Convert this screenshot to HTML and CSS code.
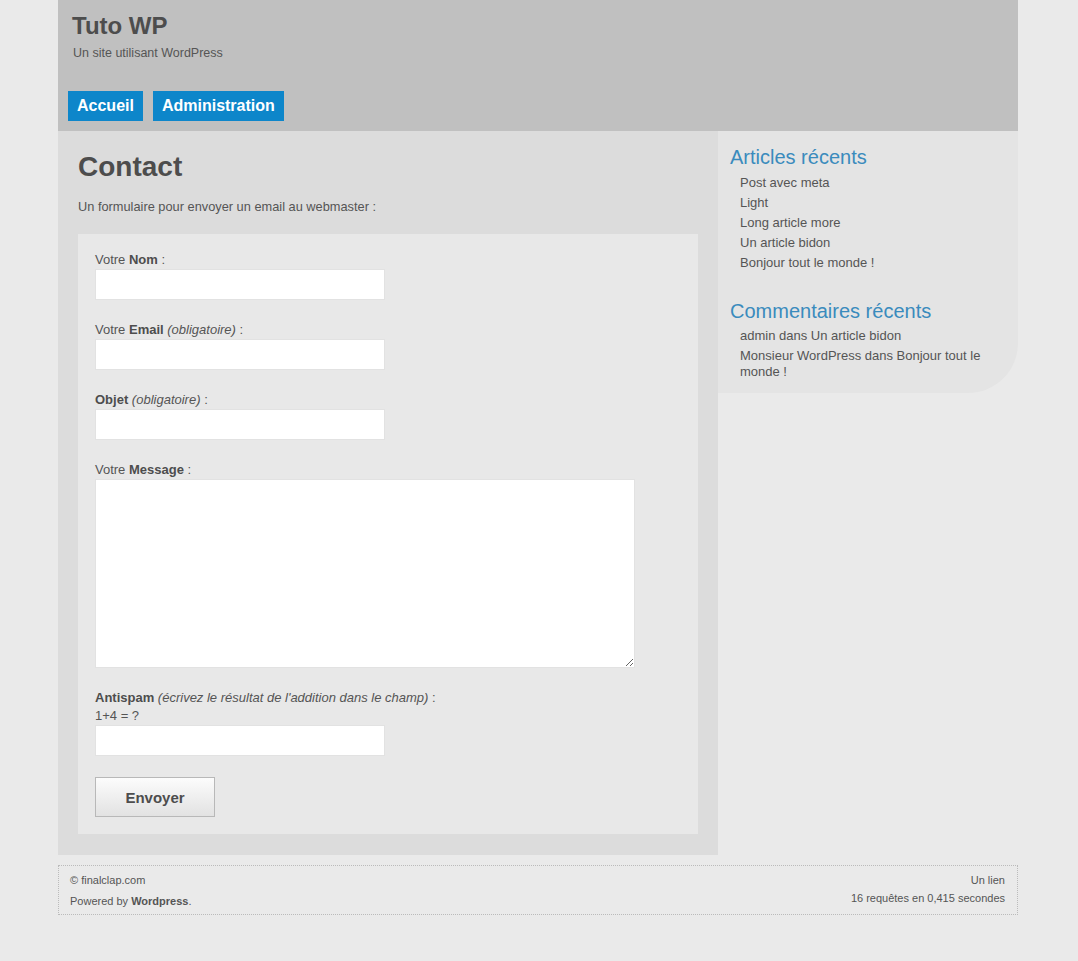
FILE: index.html
```html
<!DOCTYPE html>
<html>
<head>
    <title>Contact | Tuto WP</title>
    <link rel="stylesheet" href="styles.css">
</head>
<body>
    <div class="wrapper">
        <div class="header">
            <h1 class="site-title">Tuto WP</h1>
            <p class="tagline">Un site utilisant WordPress</p>
            <ul class="nav">
                <li><a href="/">Accueil</a></li>
                <li><a href="/wp-admin">Administration</a></li>
            </ul>
        </div>

        <div class="columns">
            <div class="main">
                <h2 class="page-title">Contact</h2>
                <p class="intro">Un formulaire pour envoyer un email au webmaster :</p>

                <form class="contact-form">
                    <div class="field">
                        <label for="nom">Votre <b>Nom</b> :</label>
                        <input type="text" id="nom" name="nom">
                    </div>
                    <div class="field">
                        <label for="email">Votre <b>Email</b> <i>(obligatoire)</i> :</label>
                        <input type="text" id="email" name="email">
                    </div>
                    <div class="field">
                        <label for="objet"><b>Objet</b> <i>(obligatoire)</i> :</label>
                        <input type="text" id="objet" name="objet">
                    </div>
                    <div class="field">
                        <label for="message">Votre <b>Message</b> :</label>
                        <textarea id="message" name="message"></textarea>
                    </div>
                    <div class="field">
                        <label for="antispam"><b>Antispam</b> <i>(écrivez le résultat de l'addition dans le champ)</i> :<br>1+4 = ?</label>
                        <input type="text" id="antispam" name="antispam">
                    </div>
                    <div class="field">
                        <input type="submit" value="Envoyer" class="sendbtn">
                    </div>
                </form>
            </div>

            <div class="sidebar">
                <h3>Articles récents</h3>
                <ul>
                    <li><a href="#">Post avec meta</a></li>
                    <li><a href="#">Light</a></li>
                    <li><a href="#">Long article more</a></li>
                    <li><a href="#">Un article bidon</a></li>
                    <li><a href="#">Bonjour tout le monde !</a></li>
                </ul>

                <h3>Commentaires récents</h3>
                <ul class="comments">
                    <li>admin dans <a href="#">Un article bidon</a></li>
                    <li>Monsieur WordPress dans <a href="#">Bonjour tout le monde !</a></li>
                </ul>
            </div>
        </div>

        <div class="footer">
            <div class="footer-left">
                <p>&copy; finalclap.com</p>
                <p class="powered">Powered by <a href="#">Wordpress</a>.</p>
            </div>
            <div class="footer-right">
                <p><a href="#">Un lien</a></p>
                <p class="stats">16 requêtes en 0,415 secondes</p>
            </div>
        </div>
    </div>
</body>
</html>
```

FILE: styles.css
```css
body {
    margin: 0;
    background-color: #eaeaea;
    font-family: "Liberation Sans", Arial, sans-serif;
    color: #555;
}

a {
    color: #555;
    text-decoration: none;
}

.wrapper {
    width: 960px;
    margin: 0 auto 0 58px;
}

.header {
    background-color: #c0c0c0;
    height: 131px;
    box-sizing: border-box;
    padding-top: 12px;
}

.site-title {
    margin: 0;
    padding-left: 14px;
    font-size: 24px;
    line-height: 28px;
    color: #4d4d4d;
}

.tagline {
    margin: 5px 0 0;
    padding-left: 15px;
    font-size: 12.5px;
    line-height: 16px;
}

.nav {
    display: flex;
    gap: 10px;
    list-style: none;
    margin: 30px 0 0 10px;
    padding: 0;
}

.nav a {
    display: block;
    height: 30px;
    line-height: 30px;
    padding: 0 9px;
    background-color: #0d86ca;
    color: white;
    font-weight: bold;
    font-size: 16px;
}

.columns {
    display: flex;
    align-items: flex-start;
}

.main {
    width: 660px;
    box-sizing: border-box;
    background-color: #dcdcdc;
    padding: 19px 20px 21px;
}

.page-title {
    margin: 0;
    font-size: 28px;
    line-height: 34px;
    color: #4d4d4d;
}

.intro {
    margin: 15px 0 19px;
    font-size: 12.8px;
    line-height: 16px;
}

.contact-form {
    background-color: #e8e8e8;
    padding: 17px;
}

.field {
    margin-bottom: 21px;
}

.field:last-child {
    margin-bottom: 0;
}

.field label {
    display: block;
    font-size: 13px;
    line-height: 18px;
}

.field label b {
    color: #4d4d4d;
}

input[type=text], textarea {
    display: block;
    width: 290px;
    height: 31px;
    box-sizing: border-box;
    border: 1px solid #e2e2e2;
    background-color: white;
    margin: 0;
}

textarea {
    width: 540px;
    height: 189px;
    resize: both;
}

.sendbtn {
    width: 120px;
    height: 40px;
    border: 1px solid #b8b8b8;
    background: linear-gradient(#fcfcfc, #e2e2e2);
    color: #4d4d4d;
    font-family: "Liberation Sans", Arial, sans-serif;
    font-weight: bold;
    font-size: 15px;
    cursor: pointer;
}

.sidebar {
    width: 300px;
    box-sizing: border-box;
    background-color: #e4e4e4;
    padding: 14px 20px 11px 12px;
    border-bottom-right-radius: 50px;
}

.sidebar h3 {
    margin: 0;
    font-size: 20px;
    font-weight: normal;
    line-height: 24px;
    color: #3a8bbd;
}

.sidebar ul {
    list-style: none;
    margin: 4px 0 26px;
    padding-left: 10px;
    font-size: 13px;
}

.sidebar li {
    line-height: 20px;
}

.sidebar .comments {
    margin: 3px 0 0;
}

.sidebar .comments li {
    line-height: 16px;
    padding: 2px 0;
}

.footer {
    display: flex;
    justify-content: space-between;
    margin-top: 10px;
    height: 50px;
    box-sizing: border-box;
    border: 1px dotted #bbb;
    padding: 7px 12px 0 11px;
    font-size: 11px;
}

.footer p {
    margin: 0;
    line-height: 14px;
}

.footer-left .powered {
    margin-top: 7px;
}

.footer-left .powered a {
    font-weight: bold;
}

.footer-right {
    text-align: right;
}

.footer-right .stats {
    margin-top: 4px;
}
```
